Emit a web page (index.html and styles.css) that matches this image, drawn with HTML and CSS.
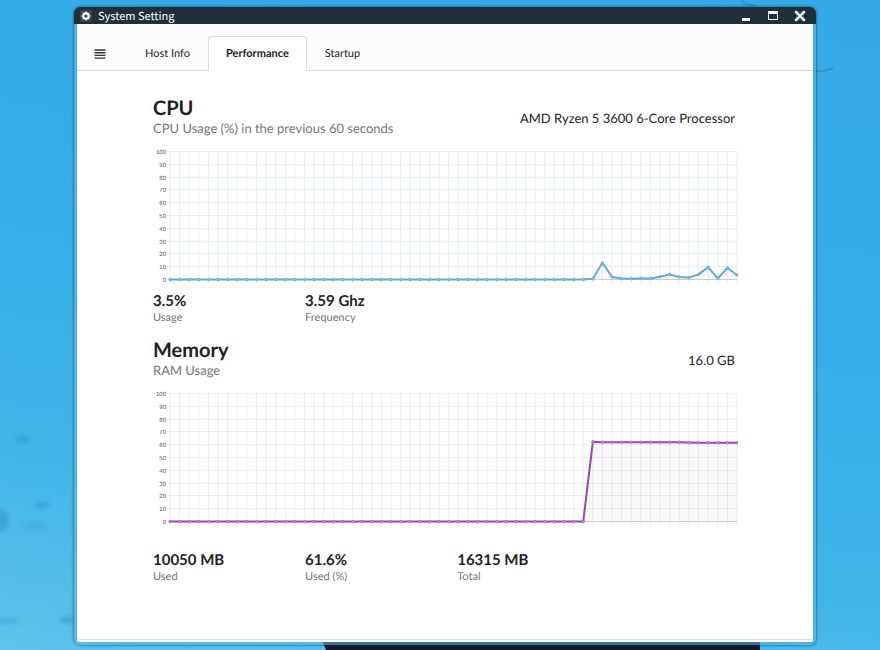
FILE: index.html
```
<!DOCTYPE html>
<html lang="en">
<head>
  <meta charset="UTF-8">
  <meta name="viewport" content="width=device-width, initial-scale=1.0">
  <title>System Setting</title>
  <link rel="stylesheet" href="styles.css">
</head>
<body>
  <svg class="wallpaper" preserveAspectRatio="none" viewBox="0 0 880 650" aria-hidden="true">
    <defs>
      <filter id="soft"><feGaussianBlur stdDeviation="2"/></filter>
    </defs>
    <g fill="#2587bd" opacity=".4" filter="url(#soft)">
      <ellipse cx="23" cy="439" rx="8" ry="3"/>
      <ellipse cx="42" cy="505" rx="8" ry="3"/>
      <ellipse cx="2" cy="521" rx="7" ry="11"/>
      <ellipse cx="35" cy="526" rx="12" ry="4" opacity=".5"/>
      <ellipse cx="8" cy="621" rx="12" ry="2"/>
      <ellipse cx="68" cy="620" rx="8" ry="4"/>
    </g>
    <path d="M741 0l4 4 12 2M816 71h8l9-3" fill="none" stroke="#2587bd" stroke-width="2" opacity=".6"/>
    <path d="M322 640h438v10H326z" fill="#10182a"/>
  </svg>

  <div class="window">
    <header class="titlebar">
      <svg class="app-icon" viewBox="0 0 12 12" aria-hidden="true">
        <rect width="12" height="12" rx="1" fill="#3b4247"/>
        <circle cx="6" cy="6" r="3.800" fill="#fff"/>
        <path d="M6 1.500v9M1.500 6h9M2.800 2.800l6.400 6.400M9.200 2.800L2.800 9.200" stroke="#fff" stroke-width="1.200"/>
        <circle cx="6" cy="6" r="1.600" fill="#333b40"/>
      </svg>
      <h1 class="title">System Setting</h1>
      <div class="window-buttons">
        <button type="button" aria-label="Minimize">
          <svg viewBox="0 0 12 12"><path d="M2 8h8v3H2z" fill="#fff"/></svg>
        </button>
        <button type="button" aria-label="Maximize">
          <svg viewBox="0 0 12 12"><path d="M1 1h10v9H1zM2 4v5h8V4z" fill="#fff" fill-rule="evenodd"/></svg>
        </button>
        <button type="button" aria-label="Close">
          <svg viewBox="0 0 12 12"><path d="M2 2l8 8M10 2l-8 8" stroke="#fff" stroke-width="2.500" stroke-linecap="round"/></svg>
        </button>
      </div>
    </header>

    <main class="content">
      <nav class="tabs">
        <button type="button" class="tab menu" aria-label="Menu">
          <svg viewBox="0 0 11 10"><path d="M0 1h11M0 3.700h11M0 6.400h11M0 9.100h11" stroke="#333" stroke-width="1.400"/></svg>
        </button>
        <button type="button" class="tab">Host Info</button>
        <button type="button" class="tab active">Performance</button>
        <button type="button" class="tab">Startup</button>
      </nav>

      <div class="panels">
        <section class="panel">
          <div class="panel-header">
            <h2>CPU<span class="sub">CPU Usage (%) in the previous 60 seconds</span></h2>
            <p class="spec">AMD Ryzen 5 3600 6-Core Processor</p>
          </div>
          <svg class="chart cpu" id="cpuChart" role="img" aria-label="CPU usage"></svg>
          <div class="stats">
            <div class="stat">3.5%<span class="sub">Usage</span></div>
            <div class="stat">3.59 Ghz<span class="sub">Frequency</span></div>
          </div>
        </section>

        <section class="panel">
          <div class="panel-header">
            <h2>Memory<span class="sub">RAM Usage</span></h2>
            <p class="spec">16.0 GB</p>
          </div>
          <svg class="chart ram" id="ramChart" role="img" aria-label="RAM usage"></svg>
          <div class="stats ram-stats">
            <div class="stat">10050 MB<span class="sub">Used</span></div>
            <div class="stat">61.6%<span class="sub">Used (%)</span></div>
            <div class="stat">16315 MB<span class="sub">Total</span></div>
          </div>
        </section>
      </div>
    </main>
  </div>

  <script src="script.js"></script>
</body>
</html>
```

FILE: styles.css
```
* {
  box-sizing: border-box;
}
body {
  margin: 0;
  min-height: 100vh;
  padding: 7px 64px 5px 74px;
  display: flex;
  background: linear-gradient(10deg, #60c3ec 0%, #3fb5e8 25%, #35aeea 60%, #35a9e5 100%);
  color: #222;
  font-family: Lato, sans-serif;
  text-rendering: geometricPrecision;
}
h1, h2, p {
  margin: 0;
}
button {
  border: 0;
  padding: 0;
  background: none;
  font: inherit;
  color: inherit;
  text-rendering: inherit;
  cursor: pointer;
}
.wallpaper {
  position: absolute;
  inset: 0;
  width: 100%;
  height: 100%;
  z-index: -1;
}

/* window frame */
.window {
  flex: 1;
  display: flex;
  flex-direction: column;
  padding: 0 3px 3px;
  border-radius: 6px;
  background: rgba(90, 180, 220, 0.6);
  box-shadow: 0 0 3px rgba(0, 40, 60, 0.8);
  overflow: hidden;
}
.titlebar {
  display: flex;
  align-items: center;
  height: 17px;
  margin: 0 -3px;
  padding: 0 10px 0 6px;
  background: #1f303a;
  color: #fff;
}
.app-icon {
  width: 12px;
  height: 12px;
}
.title {
  flex: 1;
  margin-left: 6px;
  font-family: "Noto Sans CJK SC", sans-serif;
  font-size: 11px;
  line-height: 18px;
  font-weight: 400;
}
.window-buttons {
  display: flex;
  gap: 15px;
}
.window-buttons button,
.window-buttons svg {
  display: block;
  width: 12px;
  height: 12px;
}

.content {
  flex: 1;
  background: #fff;
  border-radius: 0 0 3px 3px;
  box-shadow: inset 0 -2px #fff, inset 0 -3px #ddd;
}

/* tabs */
.tabs {
  display: flex;
  height: 47px;
  padding-top: 12px;
  background: #fcfcfc;
  border-bottom: 1px solid #dcdcdc;
}
.tab {
  height: 35px;
  padding: 0 17px 1px;
  border: 1px solid transparent;
  border-bottom: 0;
  font-size: 11px;
}
.tab.menu {
  padding-right: 20px;
  padding-left: 16px;
}
.tab.menu svg {
  display: block;
  width: 12px;
  height: 10px;
}
.tab.active {
  background: #fff;
  border-color: #dcdcdc;
  border-radius: 4px 4px 0 0;
  font-weight: 700;
}

/* panels */
.panels {
  padding: 25px 75px 0 76px;
}
.panel {
  margin-bottom: 13px;
}
.panel-header {
  display: flex;
  justify-content: space-between;
  align-items: center;
  padding-right: 3px;
}
.panel h2 {
  font-size: 20px;
  line-height: 24px;
  font-weight: 700;
}
.sub {
  display: block;
  color: #767676;
  font-weight: 400;
}
h2 .sub {
  font-size: 13px;
  line-height: 17px;
}
.spec {
  padding-top: 3px;
  font-size: 13px;
}
.stats {
  display: flex;
  margin-top: 8px;
}
.ram-stats {
  margin-top: 25px;
}
.stat {
  width: 26%;
  font-size: 15px;
  line-height: 18px;
  font-weight: 700;
}
.stat .sub {
  font-size: 11px;
  line-height: 15px;
}

/* charts */
.chart {
  display: block;
  width: 100%;
  height: 138px;
  margin-top: 9px;
}
.chart text {
  fill: #555;
  font: 6px "Liberation Sans", sans-serif;
  text-anchor: end;
}
.chart .line {
  fill: none;
  stroke-width: 2;
  stroke-linejoin: round;
}
.chart .grid {
  fill: none;
  stroke-width: 1;
}
.chart .base {
  stroke: #ccc;
}
.chart .area {
  fill: rgba(0, 0, 0, 0.02);
}
.cpu .grid {
  stroke: rgba(17, 105, 157, 0.1);
}
.cpu .line {
  stroke: #64a9cf;
}
.cpu circle {
  fill: #9fcbe2;
  stroke: #64a9cf;
}
.ram .grid {
  stroke: rgba(110, 40, 130, 0.09);
}
.ram .line {
  stroke: #9547ad;
}
.ram circle {
  fill: #cf9ddd;
  stroke: #ab62c2;
}
```

FILE: script.js
```
const cpu = new Array(44).fill(0).concat([0.5, 13, 2, 0.8, 0.6, 0.8, 0.8, 2.2, 4, 2, 1.5, 4, 9.5, 1, 9, 3.5]);
const ram = new Array(44).fill(0).concat([62.3, 62, 62, 62, 62, 62, 62, 62, 61.9, 61.9, 61.7, 61.6, 61.6, 61.6, 61.6, 61.6]);

function drawChart(id, data) {
  const svg = document.getElementById(id);
  const left = 17;
  const top = 5;
  const height = 128;
  const bottom = top + height;
  const right = svg.getBoundingClientRect().width - 1;
  const step = (right - left) / (data.length - 1);
  const y = value => bottom - value * height / 100;

  let grid = '';
  let labels = '';
  for (let v = 0; v <= 100; v += 10) {
    const gy = Math.round(y(v)) + 0.5;
    grid += `M${left - 3} ${gy}H${right}`;
    labels += `<text x="${left - 4}" y="${gy + 2}">${v}</text>`;
  }
  data.forEach((v, i) => {
    grid += `M${left + i * step} ${top}V${bottom + 4}`;
  });

  const points = data.map((v, i) => [left + i * step, y(v) + 0.5]);
  const line = 'M' + points.map(p => p.join(' ')).join('L');
  const dots = points.map(p => `<circle cx="${p[0]}" cy="${p[1]}" r="1.2"/>`).join('');

  svg.innerHTML = `<path class="grid" d="${grid}"/>
    <path class="base" d="M${left} ${bottom + 0.5}H${right}"/>${labels}
    <path class="area" d="${line}V${bottom}H${left}z"/>
    <path class="line" d="${line}"/>${dots}`;
}

function draw() {
  drawChart('cpuChart', cpu);
  drawChart('ramChart', ram);
}

window.addEventListener('resize', draw);
draw();
```
